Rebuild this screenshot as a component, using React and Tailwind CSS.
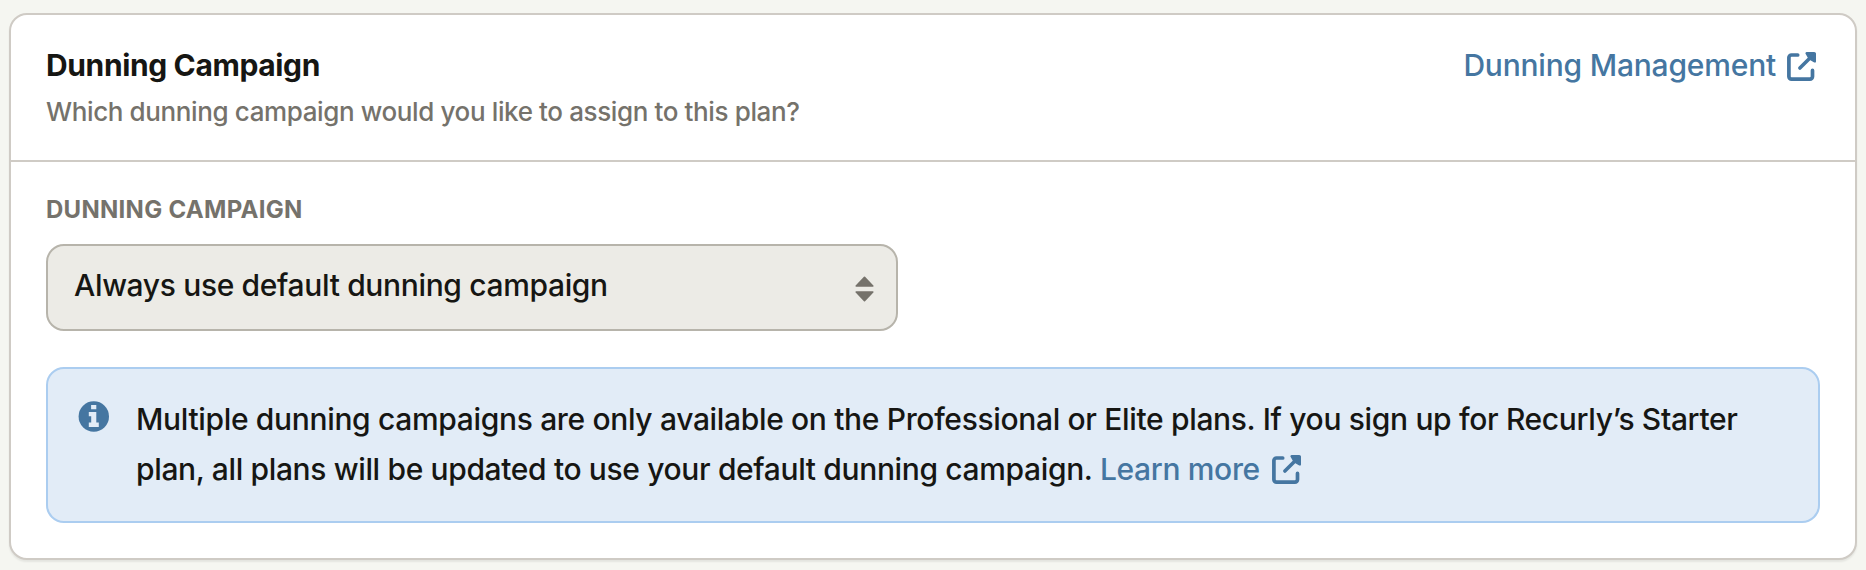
import React from "react";

export default function App() {
  return (
    <div className="min-h-[570px] bg-[#f5f6f1] pt-[13px] px-[9px] pb-[10px] font-['Inter',sans-serif] text-[#161613]">
      <section className="h-[547px] bg-white border-2 border-[#cfcbc5] rounded-[18px] shadow-[0_2px_2px_rgba(0,0,0,0.07)]">

        {/* Header */}
        <header className="h-[147px] px-[35px] pt-[30px] flex justify-between items-start border-b-2 border-[#cfcbc5]">
          <div>
            <h2 className="text-[30px] leading-[40px] font-bold tracking-[-0.37px] whitespace-nowrap">Dunning Campaign</h2>
            <p className="mt-2 text-[26px] leading-[37px] font-medium tracking-[-0.38px] text-[#75726b] whitespace-nowrap">
              Which dunning campaign would you like to assign to this plan?
            </p>
          </div>
          <a href="#" className="flex items-center text-[30px] leading-[40px] font-medium text-[#4576a1] whitespace-nowrap mr-[4px]">
            <span className="tracking-[-0.2px]">Dunning Management</span>
            <ExternalIcon className="ml-[11px] mt-[2px]" />
          </a>
        </header>

        {/* Body */}
        <div className="px-[35px] pt-[32px]">
          <label className="block text-[24px] leading-[32px] font-bold tracking-[0.28px] uppercase text-[#75726b]">
            Dunning Campaign
          </label>
          <button className="mt-[18px] w-[852px] h-[87px] pl-[26px] pr-[22px] flex items-center justify-between bg-[#ecebe6] border-2 border-[#b7b4ab] rounded-[18px]">
            <span className="pb-[5px] text-[30px] leading-[40px] font-medium tracking-[-0.35px] whitespace-nowrap">
              Always use default dunning campaign
            </span>
            <SortIcon />
          </button>

          <div className="mt-9 h-[156px] pl-[30px] pt-[25px] flex items-start bg-[#e2ecf7] border-2 border-[#abcdf0] rounded-[18px]">
            <InfoIcon />
            <p className="ml-[27px] text-[30px] leading-[50px] font-medium tracking-[-0.34px] whitespace-nowrap">
              Multiple dunning campaigns are only available on the Professional or Elite plans. If you sign up for Recurly’s Starter
              <br />
              <span className="tracking-[-0.36px]">
                plan, all plans will be updated to use your default dunning campaign.{" "}
              </span>
              <a href="#" className="text-[#4576a1]">
                <span>Learn more</span>
                <ExternalIcon className="inline-block align-[-4px] ml-[12px]" />
              </a>
            </p>
          </div>
        </div>
      </section>
    </div>
  );
}

function ExternalIcon({ className }) {
  return (
    <svg className={`w-[29px] h-[29px] shrink-0 ${className}`} viewBox="0 0 29 29" fill="none" stroke="currentColor" strokeLinecap="round" strokeLinejoin="round">
      <path d="M10.7 3H4.5A2.6 2.6 0 0 0 1.9 5.6V24.5A2.6 2.6 0 0 0 4.5 27.1H22.9A2.6 2.6 0 0 0 25.5 24.5V18.4" strokeWidth="3.7" />
      <path d="M12.9 16.1 24 5" strokeWidth="3.6" />
      <path d="M19.6 1.2H27.2A.6 .6 0 0 1 27.8 1.8V9.4L24 7.2 21.7 4.9Z" fill="currentColor" strokeWidth="2.4" />
    </svg>
  );
}

function SortIcon() {
  return (
    <svg className="w-[19px] h-[26px] mt-[3px] shrink-0" viewBox="0 0 19 26" fill="#75726b" stroke="#75726b" strokeWidth="1.6" strokeLinejoin="round">
      <path d="M9.5 1.4 17.8 10H1.2Z" />
      <path d="M9.5 24.6 1.2 16H17.8Z" />
    </svg>
  );
}

function InfoIcon() {
  return (
    <svg className="w-[31px] h-[31px] mt-[7px] shrink-0" viewBox="0 0 31 31">
      <circle cx="15.8" cy="15.5" r="15.2" fill="#4576a1" />
      <path d="M13.1 3.9H18.3V8.2H13.1ZM10.8 11H18.3V21.6H20.8V25.9H10.8V21.6H13.2V15.3H10.8Z" fill="#e2ecf7" />
    </svg>
  );
}
